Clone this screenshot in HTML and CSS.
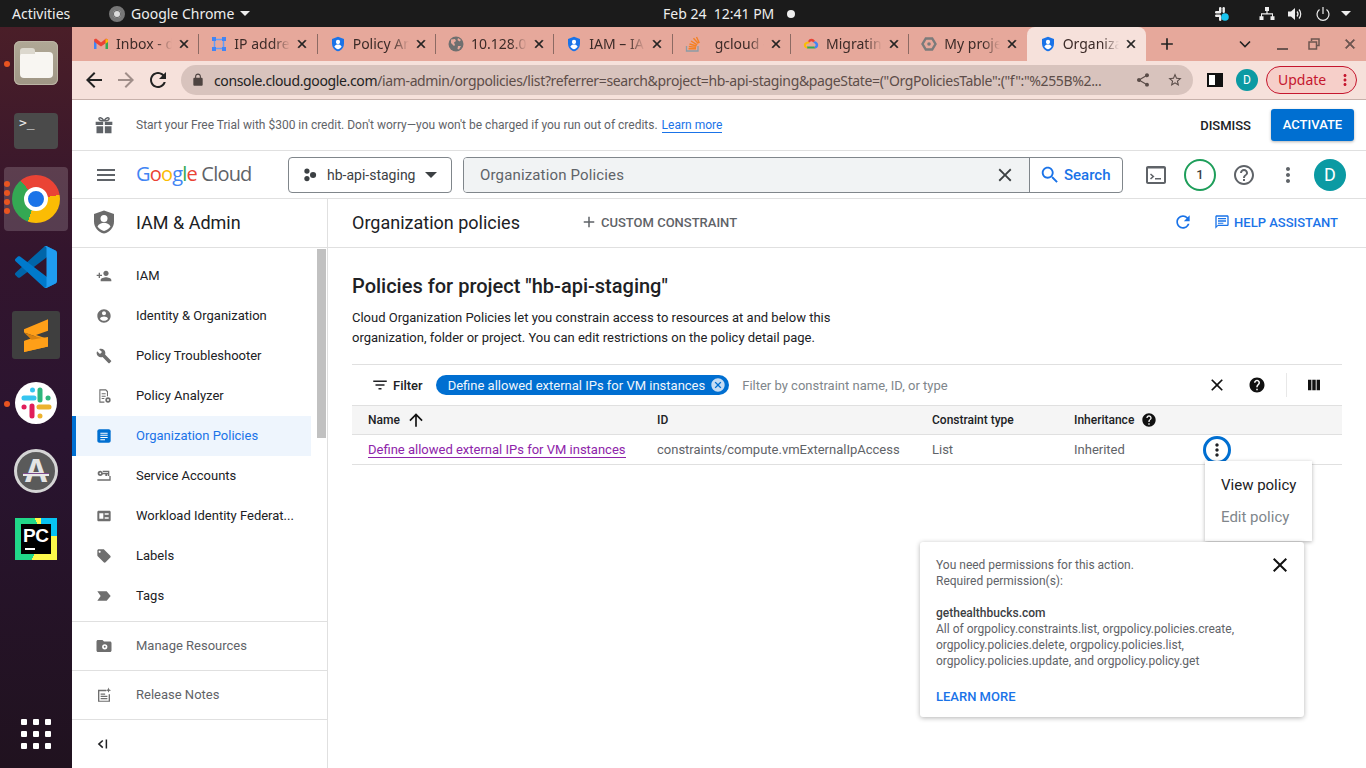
FILE: index.html
```html
<!DOCTYPE html>
<html lang="en">
<head>
<meta charset="utf-8">
<title>Organization policies</title>
<link rel="stylesheet" href="styles.css">
</head>
<body>
<svg class="defs" width="0" height="0" aria-hidden="true">
  <symbol id="i-close" viewBox="0 0 24 24"><path d="M19 6.41L17.59 5 12 10.59 6.41 5 5 6.41 10.59 12 5 17.59 6.41 19 12 13.41 17.59 19 19 17.59 13.41 12z"/></symbol>
  <symbol id="i-shield" viewBox="0 0 24 24"><path fill="#1a73e8" d="M12 1L3 4.500v6.600c0 5.500 3.800 10.600 9 11.900 5.200-1.300 9-6.400 9-11.900V4.500z"/><circle cx="12" cy="9" r="3.200" fill="#fff"/><path fill="#fff" d="M6.500 16c1-2.300 3.300-3.200 5.500-3.200s4.500.9 5.500 3.200c-1.300 1.900-3.300 3.200-5.500 3.800-2.200-.6-4.200-1.900-5.500-3.800z"/></symbol>
  <symbol id="i-more" viewBox="0 0 24 24"><path d="M12 8c1.100 0 2-.9 2-2s-.9-2-2-2-2 .9-2 2 .9 2 2 2zm0 2c-1.100 0-2 .9-2 2s.9 2 2 2 2-.9 2-2-.9-2-2-2zm0 6c-1.100 0-2 .9-2 2s.9 2 2 2 2-.9 2-2-.9-2-2-2z"/></symbol>
  <symbol id="i-help" viewBox="0 0 24 24"><path d="M12 2C6.480 2 2 6.480 2 12s4.480 10 10 10 10-4.480 10-10S17.520 2 12 2zm1 17h-2v-2h2v2zm2.070-7.750l-.9.920C13.450 12.900 13 13.500 13 15h-2v-.5c0-1.100.45-2.100 1.170-2.830l1.240-1.260c.37-.36.59-.86.59-1.410 0-1.100-.9-2-2-2s-2 .9-2 2H8c0-2.210 1.790-4 4-4s4 1.790 4 4c0 .88-.36 1.680-.93 2.250z"/></symbol>
</svg>

<header class="topbar">
  <span class="top-activities">Activities</span>
  <span class="top-app">
    <span class="top-chrome"></span>
    <span>Google Chrome</span>
    <span class="caret-white"></span>
  </span>
  <span class="top-clock">Feb 24&nbsp;&nbsp;12:41 PM<span class="top-dot"></span></span>
  <span class="top-tray">
    <svg class="tray-slack" viewBox="0 0 16 16" width="16" height="16"><g fill="#eee"><rect x="1" y="5" width="6" height="2.400" rx="1.200"/><rect x="5" y="1" width="2.400" height="6" rx="1.200"/><rect x="1" y="8.500" width="6" height="2.400" rx="1.200"/><rect x="8.500" y="1" width="2.400" height="6" rx="1.200"/><rect x="5" y="10" width="2.400" height="5" rx="1.200"/></g><circle cx="11" cy="11" r="3.800" fill="#19c5f0"/></svg>
    <svg class="tray-net" viewBox="0 0 16 16" width="16" height="16"><path fill="#eee" d="M6 1h4v4H8.600v2.300H14v3h1.500V14h-4v-3.700H13V8.500H3v1.800h1.500V14h-4v-3.700H2v-3h5.400V5H6z"/></svg>
    <svg class="tray-vol" viewBox="0 0 16 16" width="16" height="16"><path fill="#eee" d="M1 5.500h3L8 2v12l-4-3.500H1z"/><path fill="none" stroke="#eee" stroke-width="1.200" d="M10 5.500c1.200 1.400 1.200 3.600 0 5M12 3.500c2.300 2.500 2.300 6.500 0 9"/></svg>
    <svg class="tray-pow" viewBox="0 0 16 16" width="16" height="16"><path fill="none" stroke="#eee" stroke-width="1.200" d="M4.500 3.500a6 6 0 1 0 7 0M8 1v7"/></svg>
    <span class="caret-white"></span>
  </span>
</header>

<div class="desktop">
  <nav class="dock">
    <div class="slot"><span class="run-dot"></span>
      <span class="d-files"><span class="d-folder"></span></span>
    </div>
    <div class="slot">
      <span class="d-term">&gt;_</span>
    </div>
    <div class="slot slot-active"><span class="run-dots"><i></i><i></i><i></i><i></i></span>
      <span class="d-chrome"><span class="d-chrome-in"></span></span>
    </div>
    <div class="slot">
      <svg viewBox="0 0 100 100" width="42" height="42"><path fill="#0065a9" d="M96.460 10.800L75.860.88c-2.390-1.150-5.240-.66-7.110 1.210L1.300 63.580c-1.810 1.650-1.810 4.510 0 6.170l5.510 5c1.490 1.350 3.720 1.450 5.320.24L93.360 13.370C96.090 11.300 100 13.250 100 16.670v-.24c0-2.400-1.380-4.590-3.540-5.630z"/><path fill="#007acc" d="M96.460 89.200l-20.600 9.920c-2.390 1.150-5.240.66-7.110-1.200L1.300 36.420c-1.810-1.650-1.810-4.510 0-6.170l5.510-5c1.490-1.350 3.720-1.450 5.320-.24l81.230 61.620c2.730 2.070 6.640.12 6.640-3.300v.24c0 2.400-1.380 4.590-3.540 5.630z"/><path fill="#1f9cf0" d="M75.860 99.130c-2.390 1.150-5.240.66-7.110-1.210C71.060 100.220 75 98.590 75 95.330V4.670c0-3.260-3.940-4.890-6.250-2.590 1.870-1.870 4.720-2.360 7.110-1.210l20.600 9.910c2.160 1.040 3.540 3.230 3.540 5.630v67.180c0 2.400-1.380 4.590-3.540 5.630z"/></svg>
    </div>
    <div class="slot">
      <span class="d-sublime"><svg viewBox="0 0 48 48" width="48" height="48"><path fill="#ff9f18" d="M12 18.300L36 8.300v11.400L24 24l12 4v7.500L12 41V30l12-4.600L12 21.500z"/><path fill="#d9820f" d="M12 21.500l12 3.900 12 3v1.500L24 33z"/><path fill="#ff9f18" d="M12 30l24-4v9.500L12 41z"/></svg></span>
    </div>
    <div class="slot"><span class="run-dot"></span>
      <span class="d-slack"><svg viewBox="0 0 42 42" width="42" height="42" fill="none" stroke-width="5" stroke-linecap="round"><path stroke="#36c5f0" d="M9 16h10M17.500 8v.1"/><path stroke="#2eb67d" d="M25 8v10M33 16h.1"/><path stroke="#ecb22e" d="M24 25h10M25 34v.1"/><path stroke="#e01e5a" d="M17 24v10M9 25h.1"/></svg></span>
    </div>
    <div class="slot">
      <span class="d-updater"><span class="d-updater-a">A</span><span class="d-updater-bar"></span></span>
    </div>
    <div class="slot">
      <span class="d-pycharm"><span class="d-pc"><span class="d-pc-text">PC</span><span class="d-pc-bar"></span></span></span>
    </div>
    <div class="d-grid"><i></i><i></i><i></i><i></i><i></i><i></i><i></i><i></i><i></i></div>
  </nav>

  <div class="browser">
    <div class="tabstrip">
      <div class="tab">
        <svg class="fav" viewBox="0 0 16 16"><path fill="#4285f4" d="M1 4v9h2.500V6.500z"/><path fill="#34a853" d="M15 4v9h-2.500V6.500z"/><path fill="#ea4335" d="M1 3.500 3 2.500 8 6.500l5-4 2 1-.5 2.500L8 10.500 1.500 6z"/><path fill="#fbbc04" d="M12.500 3.100 15 3.500V6l-2.500 1.800z"/></svg>
        <span class="tab-title">Inbox - d</span>
        <svg class="tab-x" viewBox="0 0 24 24"><use href="#i-close"/></svg>
      </div>
      <div class="tab">
        <svg class="fav" viewBox="0 0 16 16"><path fill="none" stroke="#669df6" stroke-width="1.500" d="M3.500 3.500h9v9h-9z"/><g fill="#4285f4"><rect x="1" y="1" width="4" height="4"/><rect x="11" y="1" width="4" height="4"/><rect x="1" y="11" width="4" height="4"/><rect x="11" y="11" width="4" height="4"/></g></svg>
        <span class="tab-title">IP address</span>
        <svg class="tab-x" viewBox="0 0 24 24"><use href="#i-close"/></svg>
      </div>
      <div class="tab">
        <svg class="fav" viewBox="0 0 24 24"><use href="#i-shield"/></svg>
        <span class="tab-title">Policy Ana</span>
        <svg class="tab-x" viewBox="0 0 24 24"><use href="#i-close"/></svg>
      </div>
      <div class="tab">
        <svg class="fav" viewBox="0 0 16 16"><circle cx="8" cy="8" r="7.500" fill="#6f6f6f"/><path fill="#e6a89b" d="M3 3.500 7 3l1 2-2 1.500L7 9l-1 1-3-3zM10 10h3l-2 3.500-1.500-.5zM10 2l3 2-1.500 1.500L9.500 4z"/></svg>
        <span class="tab-title">10.128.0.1</span>
        <svg class="tab-x" viewBox="0 0 24 24"><use href="#i-close"/></svg>
      </div>
      <div class="tab">
        <svg class="fav" viewBox="0 0 24 24"><use href="#i-shield"/></svg>
        <span class="tab-title">IAM – IAM</span>
        <svg class="tab-x" viewBox="0 0 24 24"><use href="#i-close"/></svg>
      </div>
      <div class="tab">
        <svg class="fav" viewBox="0 0 16 16"><path fill="none" stroke="#8c9ba5" stroke-width="1.300" d="M1.500 10v5h11.500v-5"/><path fill="none" stroke="#f48024" stroke-width="1.400" d="M3.500 12.800h7.500M3.800 10.500l7.300.9M4.500 8l7 2M6 5l6.200 3.800M8.500 2.300l4.800 5.200M11.500 1l2.800 6"/></svg>
        <span class="tab-title tab-title-far">gcloud - c</span>
        <svg class="tab-x" viewBox="0 0 24 24"><use href="#i-close"/></svg>
      </div>
      <div class="tab">
        <svg class="fav" viewBox="0 0 16 16"><path fill="#ea4335" d="M5 5.500C5.800 3.500 7 2.800 8.500 2.800c1.700 0 3 .9 3.600 2.500L10 6.200C9.500 5.500 9 5.200 8.300 5.200 7.400 5.200 6.800 6 6.600 6.600z"/><path fill="#4285f4" d="M12.100 5.300C14 5.800 15.200 7.300 15.200 9c0 1.800-1 3-2.700 3.400L11 10.500c.9 0 1.700-.6 1.700-1.500 0-.9-.9-1.600-2.700-2.800z"/><path fill="#34a853" d="M4 10.500h7l1.500 2H4z"/><path fill="#fbbc04" d="M5 5.500 6.600 6.600 6 7.400c-1-.1-3 .4-3 1.800 0 .9.500 1.300 1 1.300l.5 2C2.500 12.500.8 11.200.8 9c0-1.800 1.700-3.300 4.200-3.500z"/></svg>
        <span class="tab-title">Migrating</span>
        <svg class="tab-x" viewBox="0 0 24 24"><use href="#i-close"/></svg>
      </div>
      <div class="tab">
        <svg class="fav" viewBox="0 0 16 16"><path fill="none" stroke="#7b7b7b" stroke-width="2.400" d="M4.800 2.500h6.400L14.500 8l-3.300 5.500H4.800L1.500 8z"/><circle cx="8" cy="8" r="1.800" fill="#7b7b7b"/></svg>
        <span class="tab-title">My project</span>
        <svg class="tab-x" viewBox="0 0 24 24"><use href="#i-close"/></svg>
      </div>
      <div class="tab tab-active">
        <svg class="fav" viewBox="0 0 24 24"><use href="#i-shield"/></svg>
        <span class="tab-title">Organizatio</span>
        <svg class="tab-x" viewBox="0 0 24 24"><use href="#i-close"/></svg>
      </div>
      <svg class="tab-plus" viewBox="0 0 24 24"><path d="M19 13h-6v6h-2v-6H5v-2h6V5h2v6h6v2z"/></svg>
      <svg class="tab-chev" viewBox="0 0 16 16"><path fill="none" stroke="#222" stroke-width="1.600" d="M3 5.500l5 5 5-5"/></svg>
      <span class="win-min"></span>
      <svg class="win-restore" viewBox="0 0 12 12"><path fill="none" stroke="#6d5550" stroke-width="1.500" d="M3.500 3V1h7.500v6.500H8.500M1 4h7.500v7H1z"/></svg>
      <svg class="win-close" viewBox="0 0 24 24"><use href="#i-close"/></svg>
    </div>

    <div class="toolbar">
      <svg class="tb-nav" viewBox="0 0 24 24"><path d="M20 11H7.830l5.590-5.590L12 4l-8 8 8 8 1.410-1.410L7.830 13H20v-2z"/></svg>
      <svg class="tb-nav tb-forward" viewBox="0 0 24 24"><path d="M4 11h12.170l-5.590-5.590L12 4l8 8-8 8-1.410-1.410L16.170 13H4v-2z"/></svg>
      <svg class="tb-nav" viewBox="0 0 24 24"><path d="M17.650 6.350C16.200 4.900 14.210 4 12 4c-4.420 0-7.990 3.580-7.990 8s3.570 8 7.990 8c3.730 0 6.840-2.550 7.730-6h-2.080c-.82 2.330-3.040 4-5.650 4-3.310 0-6-2.690-6-6s2.690-6 6-6c1.660 0 3.140.69 4.220 1.780L13 11h7V4l-2.350 2.350z"/></svg>
      <div class="omnibox">
        <svg class="omni-lock" viewBox="0 0 24 24"><path d="M18 8h-1V6c0-2.760-2.240-5-5-5S7 3.240 7 6v2H6c-1.100 0-2 .9-2 2v10c0 1.100.9 2 2 2h12c1.100 0 2-.9 2-2V10c0-1.100-.9-2-2-2zm-2.900 0H8.900V6c0-1.710 1.390-3.100 3.100-3.100 1.710 0 3.100 1.390 3.100 3.100v2z"/></svg>
        <span class="omni-url"><b>console.cloud.google.com</b>/iam-admin/orgpolicies/list?referrer=search&amp;project=hb-api-staging&amp;pageState=("OrgPoliciesTable":("f":"%255B%2...</span>
        <svg class="omni-act" viewBox="0 0 24 24"><path d="M18 16.080c-.76 0-1.440.3-1.960.77L8.910 12.700c.05-.23.09-.46.09-.7s-.04-.47-.09-.7l7.050-4.110c.54.5 1.250.81 2.040.81 1.660 0 3-1.340 3-3s-1.340-3-3-3-3 1.340-3 3c0 .24.04.47.09.7L8.040 9.810C7.500 9.310 6.790 9 6 9c-1.660 0-3 1.340-3 3s1.340 3 3 3c.79 0 1.500-.31 2.040-.81l7.120 4.160c-.05.21-.08.43-.08.65 0 1.610 1.310 2.920 2.920 2.920 1.610 0 2.920-1.310 2.920-2.920s-1.310-2.920-2.920-2.920z"/></svg>
        <svg class="omni-act" viewBox="0 0 24 24"><path d="M22 9.240l-7.190-.62L12 2 9.190 8.630 2 9.240l5.460 4.730L5.820 21 12 17.270 18.180 21l-1.630-7.030L22 9.240zM12 15.400l-3.760 2.270 1-4.280-3.320-2.880 4.380-.38L12 6.100l1.710 4.040 4.380.38-3.320 2.880 1 4.280L12 15.400z"/></svg>
      </div>
      <span class="tb-panel"></span>
      <span class="tb-avatar">D</span>
      <span class="tb-update">Update<svg class="tb-update-dots" viewBox="0 0 24 24"><use href="#i-more"/></svg></span>
    </div>

    <div class="page">
      <div class="banner">
        <svg class="banner-gift" viewBox="0 0 24 24"><path d="M2 8h9v4H2zM13 8h9v4h-9zM3 13.500h8V22H3zM13 13.500h8V22h-8z"/><path fill="none" stroke="#5f6368" stroke-width="1.800" d="M12 7C9 2 5.500 2.500 6 5c.3 1.500 3 2 6 2zm0 0c3-5 6.500-4.500 6-2-.3 1.500-3 2-6 2z"/></svg>
        <span class="banner-text">Start your Free Trial with $300 in credit. Don't worry—you won't be charged if you run out of credits. <a class="banner-link">Learn more</a></span>
        <span class="banner-dismiss">DISMISS</span>
        <span class="banner-activate">ACTIVATE</span>
      </div>

      <div class="cloudbar">
        <svg class="cb-menu" viewBox="0 0 24 24"><path d="M3 18h18v-2H3v2zm0-5h18v-2H3v2zm0-7v2h18V6H3z"/></svg>
        <div class="logo"><span class="lg-b">G</span><span class="lg-r">o</span><span class="lg-y">o</span><span class="lg-b">g</span><span class="lg-g">l</span><span class="lg-r">e</span><span class="lg-c"> Cloud</span></div>
        <div class="project">
          <svg class="project-ic" viewBox="0 0 16 16"><circle cx="4.500" cy="3.500" r="3"/><circle cx="4.500" cy="12" r="3"/><circle cx="11.500" cy="8" r="3.500"/></svg>
          <span>hb-api-staging</span>
          <span class="caret-dark"></span>
        </div>
        <div class="searchbox">
          <div class="search-input">
            <span>Organization Policies</span>
            <svg class="search-x" viewBox="0 0 24 24"><use href="#i-close"/></svg>
          </div>
          <div class="search-btn">
            <svg viewBox="0 0 24 24"><path d="M15.500 14h-.79l-.28-.27C15.410 12.590 16 11.110 16 9.500 16 5.910 13.090 3 9.500 3S3 5.910 3 9.500 5.910 16 9.500 16c1.610 0 3.090-.59 4.230-1.570l.27.28v.79l5 4.990L20.490 19l-4.990-5zm-6 0C7.010 14 5 11.990 5 9.500S7.010 5 9.500 5 14 7.010 14 9.500 11.990 14 9.500 14z"/></svg>
            <span>Search</span>
          </div>
        </div>
        <svg class="cb-ic cb-term" viewBox="0 0 24 24"><path d="M20 3H4c-1.100 0-2 .9-2 2v14c0 1.100.9 2 2 2h16c1.100 0 2-.9 2-2V5c0-1.100-.9-2-2-2zm0 16H4V5.500h16V19z"/><path d="M7 10.500l3.500 3-3.500 3-1-1 2.200-2-2.200-2zM11 15h6v1.500h-6z"/></svg>
        <span class="cb-notif">1</span>
        <svg class="cb-ic" viewBox="0 0 24 24"><path d="M11 18h2v-2h-2v2zm1-16C6.480 2 2 6.480 2 12s4.480 10 10 10 10-4.480 10-10S17.520 2 12 2zm0 18c-4.410 0-8-3.590-8-8s3.590-8 8-8 8 3.590 8 8-3.590 8-8 8zm0-14c-2.210 0-4 1.790-4 4h2c0-1.100.9-2 2-2s2 .9 2 2c0 2-3 1.750-3 5h2c0-2.250 3-2.500 3-5 0-2.210-1.790-4-4-4z"/></svg>
        <svg class="cb-ic" viewBox="0 0 24 24"><use href="#i-more"/></svg>
        <span class="cb-avatar">D</span>
      </div>

      <div class="console">
        <aside class="side">
          <div class="side-head">
            <svg class="side-shield" viewBox="0 0 24 24"><path d="M12 0.500 2 4v7.500c0 6 4.200 10.800 10 12 5.800-1.200 10-6 10-12V4z"/><circle cx="12" cy="8.500" r="3.500" fill="#fff"/><path fill="#fff" d="M5.500 16.500c1.200-2.600 4-3.800 6.500-3.800s5.300 1.200 6.500 3.800c-1.500 2.300-3.700 3.700-6.500 4.500-2.800-.8-5-2.200-6.500-4.500z"/></svg>
            <span>IAM &amp; Admin</span>
          </div>
          <div class="side-scroll">
            <div class="side-list">
              <div class="item"><svg viewBox="0 0 24 24"><path d="M15 12c2.210 0 4-1.790 4-4s-1.790-4-4-4-4 1.790-4 4 1.790 4 4 4zm-9-2V7H4v3H1v2h3v3h2v-3h3v-2H6zm9 4c-2.670 0-8 1.340-8 4v2h16v-2c0-2.660-5.330-4-8-4z"/></svg><span>IAM</span></div>
              <div class="item"><svg viewBox="0 0 24 24"><path d="M12 2C6.480 2 2 6.480 2 12s4.480 10 10 10 10-4.480 10-10S17.520 2 12 2zm0 3c1.660 0 3 1.340 3 3s-1.340 3-3 3-3-1.340-3-3 1.340-3 3-3zm0 14.200c-2.500 0-4.710-1.280-6-3.220.03-1.990 4-3.080 6-3.080 1.990 0 5.970 1.090 6 3.080-1.290 1.940-3.500 3.220-6 3.220z"/></svg><span>Identity &amp; Organization</span></div>
              <div class="item"><svg viewBox="0 0 24 24"><path d="M22.700 19l-9.100-9.100c.9-2.300.4-5-1.500-6.900-2-2-5-2.400-7.400-1.300L9 6 6 9 1.600 4.700C.4 7.100.9 10.100 2.900 12.100c1.900 1.900 4.600 2.400 6.900 1.500l9.100 9.100c.4.4 1 .4 1.400 0l2.300-2.300c.5-.4.5-1.100.1-1.400z"/></svg><span>Policy Troubleshooter</span></div>
              <div class="item"><svg viewBox="0 0 24 24"><path d="M5 2h10l3 3v7.500h-1.600V6l-2-2.400H6.600v16.800h6V22H5z"/><path d="M8.500 8h6v1.500h-6zM8.500 11.500h6V13h-6zM8.500 15h4v1.500h-4z"/><circle cx="18" cy="18" r="4"/><circle cx="18" cy="18" r="1.500" fill="#fff"/></svg><span>Policy Analyzer</span></div>
              <div class="item item-active"><svg viewBox="0 0 24 24"><path d="M5 2h14c1.700 0 3 1.300 3 3v14c0 1.700-1.300 3-3 3H5c-1.700 0-3-1.300-3-3V5c0-1.700 1.300-3 3-3z"/><path fill="#fff" d="M6.500 7h11v1.500h-11zM6.500 10.300h11v1.500h-11zM6.500 13.600h11v1.500h-11zM6.500 16.800h7v1.500h-7z"/></svg><span>Organization Policies</span></div>
              <div class="item"><svg viewBox="0 0 24 24"><path d="M6.500 4a4 4 0 0 0-4 4 4 4 0 0 0 4 4c1.700 0 3.100-1 3.700-2.500H14V12h2.500V9.500h1V12H20V4H10v2.200h8v1.300H10.200C9.600 5.800 8.200 4 6.500 4zm0 2.700a1.300 1.300 0 1 1 0 2.600 1.300 1.300 0 0 1 0-2.600zM2 17h19v2H2zM20 12h2v7h-2z"/></svg><span>Service Accounts</span></div>
              <div class="item"><svg viewBox="0 0 24 24"><path d="M4 4h16c1.100 0 2 .9 2 2v12c0 1.100-.9 2-2 2H4c-1.100 0-2-.9-2-2V6c0-1.100.9-2 2-2zm1 4v8h6V8zm8 0v2h6V8zm0 6v2h6v-2z"/></svg><span>Workload Identity Federat...</span></div>
              <div class="item"><svg viewBox="0 0 24 24"><path d="M21.410 11.580l-9-9C12.050 2.220 11.550 2 11 2H4c-1.100 0-2 .9-2 2v7c0 .55.22 1.050.59 1.420l9 9c.36.36.86.58 1.410.58.55 0 1.050-.22 1.410-.59l7-7c.37-.36.59-.86.59-1.410 0-.55-.23-1.060-.59-1.420zM5.500 7C4.670 7 4 6.330 4 5.500S4.670 4 5.500 4 7 4.670 7 5.500 6.330 7 5.500 7z"/></svg><span>Labels</span></div>
              <div class="item"><svg viewBox="0 0 24 24"><path d="M2 5h14l6 7-6 7H2l5-7z"/></svg><span>Tags</span></div>
            </div>
            <div class="side-thumb"></div>
          </div>
          <div class="side-foot">
            <div class="foot-item"><svg viewBox="0 0 24 24"><path d="M20 6h-8l-2-2H4c-1.100 0-2 .9-2 2v12c0 1.100.9 2 2 2h16c1.100 0 2-.9 2-2V8c0-1.100-.9-2-2-2z"/><circle cx="13" cy="13" r="3.500" fill="#fff"/><circle cx="13" cy="13" r="1.300"/></svg><span>Manage Resources</span></div>
            <div class="foot-item"><svg viewBox="0 0 24 24"><path d="M4 5h11v2H5.800v12.500h12.400V11H20v10H4z"/><path d="M7.500 10h6v1.600h-6zM7.500 13h9v1.600h-9zM7.500 16h9v1.600h-9zM18 2l1 2.500L21.500 5.500 19 6.500 18 9l-1-2.500-2.500-1 2.500-1z"/></svg><span>Release Notes</span></div>
            <div class="foot-collapse"><svg viewBox="0 0 24 24"><path d="M11 6.500 5 12l6 5.500 1.400-1.500L8 12l4.400-4zM15.500 6h2v12h-2z"/></svg></div>
          </div>
        </aside>

        <main class="main">
          <div class="main-head">
            <h1 class="main-title">Organization policies</h1>
            <span class="custom"><svg viewBox="0 0 24 24"><path d="M19 13h-6v6h-2v-6H5v-2h6V5h2v6h6v2z"/></svg>CUSTOM CONSTRAINT</span>
            <svg class="refresh" viewBox="0 0 24 24"><path d="M17.650 6.350C16.200 4.900 14.210 4 12 4c-4.420 0-7.990 3.580-7.990 8s3.570 8 7.990 8c3.730 0 6.840-2.550 7.730-6h-2.080c-.82 2.330-3.040 4-5.650 4-3.310 0-6-2.690-6-6s2.690-6 6-6c1.660 0 3.140.69 4.220 1.780L13 11h7V4l-2.350 2.350z"/></svg>
            <span class="assistant"><svg viewBox="0 0 24 24"><path d="M20 2H4c-1.100 0-2 .9-2 2v18l4-4h14c1.100 0 2-.9 2-2V4c0-1.100-.9-2-2-2zm0 14H6l-2 2V4h16v12zM6 6h12v2H6zm0 3.500h12v2H6zM6 13h8v1.500H6z"/></svg>HELP ASSISTANT</span>
          </div>
          <div class="main-body">
            <h2 class="policy-title">Policies for project "hb-api-staging"</h2>
            <p class="policy-desc">Cloud Organization Policies let you constrain access to resources at and below this organization, folder or project. You can edit restrictions on the policy detail page.</p>
            <div class="filterbar">
              <svg class="fb-icon" viewBox="0 0 24 24"><path d="M10 18h4v-2h-4v2zM3 6v2h18V6H3zm3 7h12v-2H6v2z"/></svg>
              <span class="fb-label">Filter</span>
              <span class="chip">Define allowed external IPs for VM instances<svg viewBox="0 0 24 24"><path d="M12 2C6.470 2 2 6.470 2 12s4.470 10 10 10 10-4.470 10-10S17.530 2 12 2zm5 13.590L15.590 17 12 13.410 8.410 17 7 15.590 10.590 12 7 8.410 8.410 7 12 10.590 15.590 7 17 8.410 13.410 12 17 15.590z"/></svg></span>
              <span class="fb-placeholder">Filter by constraint name, ID, or type</span>
              <svg class="fb-x" viewBox="0 0 24 24"><use href="#i-close"/></svg>
              <svg class="fb-help" viewBox="0 0 24 24"><use href="#i-help"/></svg>
              <span class="fb-sep"></span>
              <svg class="fb-cols" viewBox="0 0 24 24"><path d="M4 5h4.500v14H4zM9.700 5h4.600v14H9.700zM15.500 5H20v14h-4.500z"/></svg>
            </div>
            <div class="row row-head">
              <span class="cell-name">Name<svg viewBox="0 0 24 24"><path d="M4 12l1.410 1.410L11 7.830V20h2V7.830l5.580 5.590L20 12l-8-8-8 8z"/></svg></span>
              <span>ID</span>
              <span>Constraint type</span>
              <span class="cell-inh">Inheritance<svg viewBox="0 0 24 24"><use href="#i-help"/></svg></span>
              <span></span>
            </div>
            <div class="row row-data">
              <a class="policy-link">Define allowed external IPs for VM instances</a>
              <span>constraints/compute.vmExternalIpAccess</span>
              <span>List</span>
              <span>Inherited</span>
              <span class="kebab"><svg viewBox="0 0 24 24"><use href="#i-more"/></svg></span>
            </div>
          </div>
          <div class="menu">
            <div class="menu-item">View policy</div>
            <div class="menu-item menu-off">Edit policy</div>
          </div>
          <div class="perm">
            <svg class="perm-x" viewBox="0 0 24 24"><use href="#i-close"/></svg>
            <p class="perm-line">You need permissions for this action.</p>
            <p class="perm-line">Required permission(s):</p>
            <p class="perm-org">gethealthbucks.com</p>
            <p class="perm-line">All of orgpolicy.constraints.list, orgpolicy.policies.create,</p>
            <p class="perm-line">orgpolicy.policies.delete, orgpolicy.policies.list,</p>
            <p class="perm-line">orgpolicy.policies.update, and orgpolicy.policy.get</p>
            <a class="perm-learn">LEARN MORE</a>
          </div>
        </main>
      </div>
    </div>
  </div>
</div>
</body>
</html>
```

FILE: styles.css
```css
* { box-sizing: border-box; }
html, body { margin: 0; height: 100%; overflow: hidden; }
body { width: 1366px; height: 768px; font-family: Roboto, sans-serif; color: #202124; background: #fff; display: flex; flex-direction: column; }
.defs { position: absolute; }
svg { display: block; flex: none; }
p, h1, h2 { margin: 0; }

.topbar { height: 27px; background: #1b1b1b; color: #eee; display: flex; align-items: center; font: 14px "Noto Sans", sans-serif; flex: none; position: relative; }
.top-activities { margin-left: 12px; width: 97px; }
.top-app { display: flex; align-items: center; gap: 6px; }
.top-chrome { width: 16px; height: 16px; border-radius: 50%; border: 4px solid #777; background: #ddd; box-shadow: inset 0 0 0 1px #666; }
.caret-white { width: 0; height: 0; border-left: 5px solid transparent; border-right: 5px solid transparent; border-top: 5px solid #eee; }
.top-clock { position: absolute; left: 663px; top: 4px; display: flex; align-items: center; }
.top-dot { width: 8px; height: 8px; border-radius: 50%; background: #eee; margin-left: 13px; }
.top-tray { margin-left: auto; display: flex; align-items: center; padding-right: 15px; }
.tray-slack { margin-right: 29px; }
.tray-net { margin-right: 12px; }
.tray-vol { margin-right: 12px; }
.tray-pow { margin-right: 10px; }

.desktop { flex: 1; display: flex; min-height: 0; }
.dock { width: 72px; flex: none; background: linear-gradient(180deg, #4a1e28 0%, #33152d 30%, #2a1430 55%, #20121f 100%); display: flex; flex-direction: column; padding-top: 2px; position: relative; }
.slot { height: 68px; flex: none; display: flex; align-items: center; justify-content: center; position: relative; }
.slot-active::before { content: ""; position: absolute; left: 4px; right: 4px; top: 2px; bottom: 2px; background: rgba(255,255,255,.17); border-radius: 4px; }
.slot > * { position: relative; }
.run-dot { position: absolute; left: 4px; top: 32px; width: 6px; height: 6px; border-radius: 50%; background: #e95420; }
.run-dots { position: absolute; left: 4px; top: 16px; display: flex; flex-direction: column; gap: 3px; z-index: 2; }
.run-dots i { width: 6px; height: 6px; border-radius: 50%; background: #e95420; }
.d-files { width: 44px; height: 44px; border-radius: 6px; background: linear-gradient(180deg, #b0a896, #9f9685); display: flex; align-items: center; justify-content: center; box-shadow: inset 0 0 0 1px #bbb4a4; padding-top: 3px; }
.d-folder { width: 33px; height: 26px; background: #f8f6f2; border-radius: 4px; position: relative; }
.d-folder::before { content: ""; position: absolute; left: 0; top: -4px; width: 15px; height: 6px; border-radius: 3px 3px 0 0; background: #dcd8ce; }
.d-term { width: 44px; height: 36px; border-radius: 4px; background: #4a4a4a; color: #eee; font: 13px/1 "DejaVu Sans Mono", monospace; padding: 3px 0 0 5px; }
.d-chrome { width: 48px; height: 48px; border-radius: 50%; background: conic-gradient(#ea4335 0 80deg, #fbbc04 80deg 200deg, #34a853 200deg 320deg, #ea4335 320deg); display: flex; align-items: center; justify-content: center; }
.d-chrome-in { width: 24px; height: 24px; border-radius: 50%; background: #1a73e8; border: 4px solid #fff; }
.d-sublime { width: 48px; height: 48px; border-radius: 3px; background: #3f3f3f; }
.d-slack { width: 42px; height: 42px; border-radius: 50%; background: #fff; }
.d-updater { width: 44px; height: 44px; border-radius: 50%; border: 3px solid #d5d5d5; background: #5a5a5a; display: block; position: relative; }
.d-updater-a { position: absolute; left: 0; right: 0; top: -1px; color: #e4e4e4; font: 700 32px/38px "Noto Sans", sans-serif; text-align: center; }
.d-updater-bar { position: absolute; left: 6px; right: 6px; top: 21px; height: 3px; background: #e8e8e8; border-top: 1px solid #7b4a8c; }
.d-pycharm { width: 42px; height: 42px; background: conic-gradient(from 0deg at 62% 40%, #07c3f2 0 95deg, #fcf84a 95deg 200deg, #21d789 200deg 340deg, #fcf84a 340deg); display: flex; align-items: center; justify-content: center; }
.d-pc { width: 30px; height: 30px; background: #000; color: #fff; position: relative; display: block; }
.d-pc-text { position: absolute; left: 2px; top: 2px; font: 700 19px/19px "Liberation Sans", sans-serif; letter-spacing: -.5px; }
.d-pc-bar { position: absolute; left: 4px; bottom: 4px; width: 10px; height: 2px; background: #fff; }
.d-grid { position: absolute; left: 21px; top: 692px; width: 30px; height: 30px; display: grid; grid-template-columns: repeat(3, 6px); gap: 6px; }
.d-grid i { width: 6px; height: 6px; background: #fff; border-radius: 1px; }

.browser { flex: 1; min-width: 0; display: flex; flex-direction: column; }
.tabstrip { height: 34px; background: #e6a89b; display: flex; align-items: center; padding-left: 9px; flex: none; }
.tab { width: 118.33px; height: 34px; display: flex; align-items: center; padding: 0 0 1px 12px; position: relative; font: 14px "Noto Sans", sans-serif; color: #3c2b28; flex: none; }
.tab::after { content: ""; position: absolute; right: 0; top: 7px; bottom: 7px; width: 1px; background: #8c6a63; }
.tab-active { background: #f6e1db; border-radius: 8px 8px 0 0; width: 119px; margin-left: -1px; padding-left: 13px; }
.tab-active::after { display: none; }
.fav { width: 16px; height: 16px; margin-right: 7px; }
.tab-title { width: 56px; overflow: hidden; white-space: nowrap; -webkit-mask-image: linear-gradient(90deg, #000 70%, transparent 100%); mask-image: linear-gradient(90deg, #000 70%, transparent 100%); }
.tab-title-far { margin-left: 7px; width: 49px; }
.tab-x { width: 14px; height: 14px; margin-left: 5px; fill: #222; stroke: #222; stroke-width: 1; }
.tab-plus { width: 20px; height: 20px; margin-left: 11px; fill: #222; }
.tab-chev { width: 16px; height: 16px; margin-left: 60px; }
.win-min { width: 11px; height: 2px; background: #6d5550; margin-left: 24px; margin-top: 10px; }
.win-restore { width: 12px; height: 12px; margin-left: 20px; }
.win-close { width: 16px; height: 16px; margin-left: 22px; fill: #6d5550; stroke: #6d5550; }

.toolbar { height: 39px; background: #f6e1db; border-bottom: 1px solid #c7b1ab; display: flex; align-items: center; padding-left: 10px; flex: none; }
.tb-nav { width: 24px; height: 24px; margin-right: 8px; fill: #222; }
.tb-forward { fill: #a08e89; }
.omnibox { width: 1012px; height: 30px; margin-left: 3px; border-radius: 15px; background: #d8c3bd; display: flex; align-items: center; padding-left: 10px; font: 14px "Noto Sans", sans-serif; color: #5d4d49; }
.omni-lock { width: 14px; height: 14px; fill: #4d4340; margin-right: 9px; }
.omni-url { white-space: nowrap; overflow: hidden; width: 909px; letter-spacing: -.36px; }
.omni-url b { font-weight: 400; color: #222; }
.omni-act { width: 16px; height: 16px; fill: #5a4c48; margin-left: 12px; }
.omni-act:last-child { margin-left: 16px; }
.tb-panel { width: 16px; height: 14px; border: 2px solid #111; border-right-width: 8px; margin-left: 14px; background: #fff; }
.tb-avatar { width: 22px; height: 22px; border-radius: 50%; background: #0b9aa3; color: #fff; font: 12px/22px Roboto, sans-serif; text-align: center; margin-left: 13px; }
.tb-update { width: 91px; height: 28px; margin-left: 8px; border: 1px solid #c5162e; border-radius: 14px; background: #f6cfc9; color: #c5162e; font: 14px/26px "Noto Sans", sans-serif; padding-left: 11px; position: relative; }
.tb-update-dots { position: absolute; right: 2px; top: 4px; width: 18px; height: 18px; fill: #c5162e; }

.page { flex: 1; min-height: 0; display: flex; flex-direction: column; }
.banner { height: 51px; border-bottom: 1px solid #e0e0e0; display: flex; align-items: center; padding: 0 12px 0 22px; flex: none; font-size: 12px; }
.banner-gift { width: 20px; height: 20px; fill: #5f6368; margin-right: 22px; }
.banner-text { color: #5f6368; }
.banner-link { color: #1a73e8; border-bottom: 1px solid #1a73e8; margin-left: 1px; }
.banner-dismiss { margin-left: auto; font-weight: 500; font-size: 13px; color: #202124; }
.banner-activate { width: 83px; height: 32px; margin-left: 20px; border-radius: 3px; background: #006fd1; color: #fff; text-align: center; font: 500 13px/32px Roboto, sans-serif; box-shadow: 0 1px 3px rgba(0,0,0,.3); }

.cloudbar { height: 48px; border-bottom: 1px solid #e0e0e0; display: flex; align-items: center; padding-left: 22px; flex: none; }
.cb-menu { width: 24px; height: 24px; fill: #5f6368; margin-right: 19px; }
.logo { width: 151px; margin-left: -1px; padding: 0 0 3px; font: 20px "Open Sans", sans-serif; letter-spacing: -.8px; white-space: pre; margin-right: 1px; }
.lg-b { color: #4285f4; }
.lg-r { color: #ea4335; }
.lg-y { color: #fbbc04; }
.lg-g { color: #34a853; }
.lg-c { color: #5f6368; }
.project { width: 164px; height: 36px; border: 1px solid #80868b; border-radius: 4px; display: flex; align-items: center; padding-left: 14px; font-size: 14px; color: #3c4043; }
.project-ic { width: 14px; height: 14px; fill: #3c4043; margin-right: 10px; }
.caret-dark { width: 0; height: 0; border-left: 6px solid transparent; border-right: 6px solid transparent; border-top: 6px solid #3c4043; margin-left: 10px; }
.searchbox { width: 660px; height: 36px; margin-left: 11px; border: 1px solid #80868b; border-radius: 4px; display: flex; overflow: hidden; }
.search-input { width: 566px; background: #f1f3f4; border-right: 1px solid #80868b; display: flex; align-items: center; justify-content: space-between; padding: 0 13px 0 16px; font-size: 15px; letter-spacing: .15px; color: #5f6368; }
.search-input span { padding-top: 1px; }
.search-x { width: 22px; height: 22px; fill: #3c4043; }
.search-btn { flex: 1; display: flex; align-items: center; padding-left: 9px; gap: 3px; color: #1a73e8; font-size: 15px; font-weight: 500; }
.search-btn svg { width: 22px; height: 22px; fill: #1a73e8; }
.cb-ic { width: 24px; height: 24px; fill: #5f6368; margin-left: 20px; }
.cb-term { margin-left: 21px; }
.cb-notif { width: 32px; height: 32px; margin-left: 16px; border: 2px solid #1e9e5a; border-radius: 50%; text-align: center; font: 500 13px/28px Roboto, sans-serif; color: #3c4043; margin-right: -4px; }
.cb-avatar { width: 32px; height: 32px; border-radius: 50%; background: #0b9aa3; color: #fff; font-size: 18px; line-height: 32px; text-align: center; margin-left: 14px; }

.console { flex: 1; min-height: 0; display: flex; position: relative; }
.side { width: 256px; border-right: 1px solid #e0e0e0; display: flex; flex-direction: column; flex: none; }
.side-head { height: 49px; border-bottom: 1px solid #e0e0e0; display: flex; align-items: center; padding: 0 0 2px 20px; gap: 20px; font-size: 18px; color: #202124; flex: none; }
.side-shield { width: 24px; height: 30px; fill: #6b6b6b; }
.side-scroll { height: 374px; display: flex; flex: none; border-bottom: 1px solid #e0e0e0; padding-top: 8px; position: relative; }
.side-list { width: 239px; display: flex; flex-direction: column; }
.item { height: 40px; display: flex; align-items: center; padding: 0 0 1px 24px; gap: 24px; font-size: 13px; color: #202124; flex: none; white-space: nowrap; }
.item svg { width: 16px; height: 16px; fill: #6e6e6e; }
.item-active { background: #eef5fd; color: #1a73e8; box-shadow: inset 4px 0 0 #006fd1; }
.item-active svg { fill: #006fd1; }
.side-thumb { position: absolute; left: 245px; top: 1px; width: 9px; height: 189px; background: #c1c1c1; }
.side-foot { flex: 1; display: flex; flex-direction: column; }
.foot-item { height: 49px; border-bottom: 1px solid #e0e0e0; display: flex; align-items: center; padding: 0 0 1px 23px; gap: 23px; font-size: 13px; color: #5f6368; flex: none; }
.foot-item svg { width: 18px; height: 18px; fill: #6e6e6e; }
.foot-collapse { height: 48px; padding-left: 22px; display: flex; align-items: center; }
.foot-collapse svg { width: 18px; height: 18px; fill: #202124; }

.main { flex: 1; min-width: 0; display: flex; flex-direction: column; }
.main-head { height: 49px; border-bottom: 1px solid #e0e0e0; display: flex; align-items: center; padding: 0 0 2px 24px; flex: none; }
.main-title { font-size: 18px; font-weight: 400; color: #202124; width: 228px; white-space: nowrap; }
.custom { display: flex; align-items: center; font-size: 13px; font-weight: 500; color: #5f6368; gap: 3px; }
.custom svg { width: 18px; height: 18px; fill: #5f6368; }
.refresh { width: 20px; height: 20px; fill: #1a73e8; margin-left: auto; }
.assistant { display: flex; align-items: center; gap: 4px; margin: 0 28px 0 21px; font-size: 13px; font-weight: 500; color: #1a73e8; }
.assistant svg { width: 16px; height: 16px; fill: #1a73e8; }
.main-body { padding: 25px 24px 0; flex: 1; }
.policy-title { font-size: 20px; font-weight: 500; line-height: 26px; color: #202124; }
.policy-desc { font-size: 13px; line-height: 20px; width: 490px; margin-top: 9px; color: #202124; }
.filterbar { margin-top: 16px; height: 42px; border-top: 1px solid #e0e0e0; border-bottom: 1px solid #e0e0e0; display: flex; align-items: center; padding-left: 19px; font-size: 13px; }
.fb-icon { width: 18px; height: 18px; fill: #202124; margin-right: 4px; }
.fb-label { font-weight: 500; color: #202124; }
.chip { height: 20px; margin-left: 13px; border-radius: 10px; background: #006fd1; color: #f0f6fc; padding: 0 3px 0 12px; display: flex; align-items: center; gap: 5px; white-space: nowrap; }
.chip svg { width: 16px; height: 16px; fill: #c6dcf3; }
.fb-placeholder { margin-left: 13px; color: #80868b; }
.fb-x { width: 20px; height: 20px; fill: #111; margin-left: auto; }
.fb-help { width: 18px; height: 18px; fill: #111; margin-left: 21px; }
.fb-sep { width: 1px; height: 24px; background: #e8e8e8; margin-left: 20px; }
.fb-cols { width: 18px; height: 18px; fill: #111; margin: 0 19px 0 18px; }
.row { display: grid; grid-template-columns: 289px 275px 142px 129px 1fr; padding-left: 16px; align-items: center; font-size: 13px; border-bottom: 1px solid #e0e0e0; }
.row-head { height: 29px; background: #f5f5f5; font-weight: 500; color: #202124; font-size: 12px; }
.row-data { height: 30px; color: #5f6368; position: relative; }
.cell-name, .cell-inh { display: flex; align-items: center; }
.cell-name svg { width: 20px; height: 20px; fill: #111; margin-left: 6px; }
.cell-inh svg { width: 16px; height: 16px; fill: #111; margin-left: 7px; }
.policy-link { color: #8e24aa; justify-self: start; border-bottom: 1px solid #8e24aa; line-height: 15px; }
.kebab { width: 28px; height: 28px; border: 3px solid #006fd1; border-radius: 50%; display: flex; align-items: center; justify-content: center; }
.kebab svg { width: 20px; height: 20px; fill: #202124; }
.menu { position: absolute; left: 1133px; top: 262px; width: 107px; height: 80px; background: #fff; box-shadow: 0 1px 4px rgba(0,0,0,.3); padding-top: 8px; }
.menu-item { height: 32px; padding-left: 16px; font-size: 15px; line-height: 32px; color: #202124; }
.menu-off { color: #80868b; }
.perm { position: absolute; left: 848px; top: 343px; width: 384px; height: 175px; background: #fff; box-shadow: 0 1px 5px rgba(0,0,0,.3); border-radius: 3px; padding: 15px 16px; font-size: 12px; line-height: 16px; color: #5f6368; }
.perm-x { position: absolute; right: 12px; top: 11px; width: 24px; height: 24px; fill: #111; }
.perm-org { margin-top: 16px; font-weight: 500; color: #3c4043; }
.perm-learn { display: block; margin-top: 20px; color: #1a73e8; font-weight: 500; font-size: 13px; }
```
